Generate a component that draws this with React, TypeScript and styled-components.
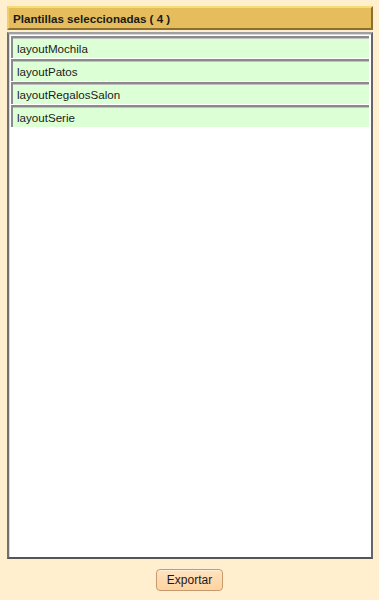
import React from "react";
import styled, { createGlobalStyle } from "styled-components";

const Global = createGlobalStyle`
  html, body { margin: 0; padding: 0; background: #ffefcf; }
  body { font-family: "Liberation Sans", Arial, sans-serif; }
`;

const Page = styled.div`
  width: 379px;
  height: 600px;
  box-sizing: border-box;
  padding: 6px 6px 0 7px;
  display: flex;
  flex-direction: column;
  background: #ffefcf;
`;

const Header = styled.div`
  height: 24px;
  box-sizing: border-box;
  background: #e5bd5c;
  border-top: 2px solid #f6dc74;
  border-left: 2px solid #f0cf6a;
  border-right: 2px solid #8b6f2e;
  border-bottom: 2px solid #8b6f2e;
  display: flex;
  align-items: center;
  padding-left: 4px;
  font-size: 11.6px;
  font-weight: bold;
  color: #1a1a1a;
`;

const ListBox = styled.div`
  margin-top: 2px;
  height: 527px;
  box-sizing: border-box;
  background: #ffffff;
  border-top: 2px solid #a0a0a0;
  border-left: 2px solid #707070;
  border-right: 2px solid #666666;
  border-bottom: 2px solid #555555;
  box-shadow: inset 1px 1px 0 #d8d8d8;
  padding: 2px 2px 0 2px;
  display: flex;
  flex-direction: column;
  gap: 1px;
`;

const Item = styled.div`
  height: 22px;
  box-sizing: border-box;
  background: #ddffd6;
  border-top: 2px solid;
  border-left: 2px solid;
  border-top-color: #8a8a8a;
  border-left-color: #8a8a8a;
  box-shadow: inset 0 1px 0 #c0c0c0;
  display: flex;
  align-items: center;
  padding: 1px 0 0 4px;
  font-size: 11.6px;
  color: #1a1a1a;
`;

const Footer = styled.div`
  display: flex;
  justify-content: center;
  padding-top: 10px;
`;

const Button = styled.button`
  width: 67px;
  height: 22px;
  margin-left: -1px;
  border: 1px solid #c59a6c;
  border-radius: 4px;
  background: linear-gradient(#ffe3bf, #ffd3a0);
  box-shadow: inset 0 1px 0 #fff0dc;
  font-family: "Liberation Sans", Arial, sans-serif;
  font-size: 12px;
  color: #1a1a1a;
  padding: 0;
  cursor: pointer;
`;

const items = ["layoutMochila", "layoutPatos", "layoutRegalosSalon", "layoutSerie"];

export default function App() {
  return (
    <>
      <Global />
      <Page>
        <Header>Plantillas seleccionadas ( 4 )</Header>
        <ListBox>
          {items.map((t) => (
            <Item key={t}>{t}</Item>
          ))}
        </ListBox>
        <Footer>
          <Button>Exportar</Button>
        </Footer>
      </Page>
    </>
  );
}
